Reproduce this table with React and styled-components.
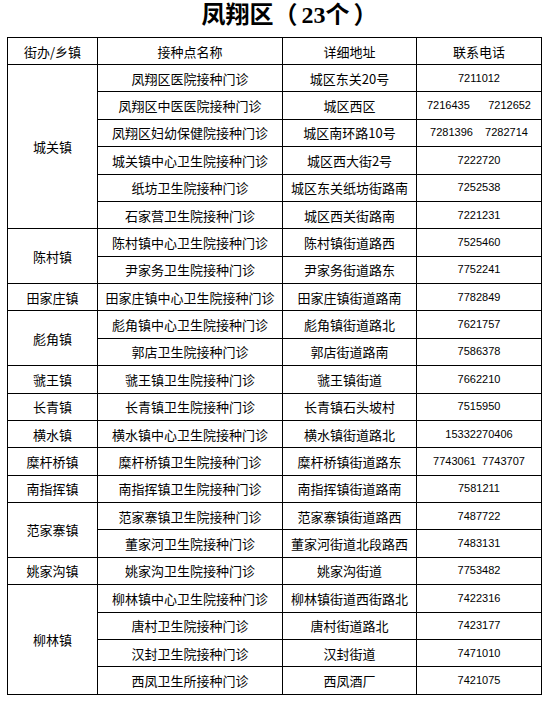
import React from "react";
import styled, { createGlobalStyle } from "styled-components";

const GlobalStyle = createGlobalStyle`
  html, body { margin: 0; padding: 0; background: #ffffff; }
  body { font-family: "Noto Sans CJK SC", "Liberation Sans", sans-serif; color: #000; }
`;

const Page = styled.div`
  width: 552px;
  padding: 0 0 0 7px;
  box-sizing: border-box;
`;

const Title = styled.h1`
  margin: 0;
  height: 37px;
  line-height: 30px;
  padding-left: 30px;
  width: 535px;
  box-sizing: border-box;
  text-align: center;
  font-family: "Liberation Serif", "Noto Sans CJK SC", serif;
  font-weight: 700;
  font-size: 24px;
  letter-spacing: 0;
`;

const TitleCount = styled.span`
  margin: 0 4px;
`;

const Table = styled.table`
  border-collapse: collapse;
  table-layout: fixed;
  width: 535px;
  border: 1px solid #000;
`;

const HeadRow = styled.tr`
  height: 27px;
`;

const Row = styled.tr`
  height: 27.39px;
`;

const Cell = styled.td`
  border: 1px solid #000;
  padding: 0;
  text-align: center;
  vertical-align: middle;
  font-family: ${(p) =>
    p.$num
      ? '"Liberation Sans", "Noto Sans CJK SC", sans-serif'
      : '"Noto Sans CJK SC", "Liberation Sans", sans-serif'};
  font-size: ${(p) => (p.$num ? "11px" : "13px")};
  line-height: 1;
  white-space: pre;
  color: #000;
  overflow: hidden;
`;

const HeadCell = styled(Cell).attrs({ as: "th" })`
  font-weight: 400;
`;

const widths = [90, 185, 134, 125];

const groups = [
  {
    town: "城关镇",
    rows: [
      ["凤翔区医院接种门诊", "城区东关20号", "7211012"],
      ["凤翔区中医医院接种门诊", "城区西区", "7216435      7212652"],
      ["凤翔区妇幼保健院接种门诊", "城区南环路10号", "7281396    7282714"],
      ["城关镇中心卫生院接种门诊", "城区西大街2号", "7222720"],
      ["纸坊卫生院接种门诊", "城区东关纸坊街路南", "7252538"],
      ["石家营卫生院接种门诊", "城区西关街路南", "7221231"],
    ],
  },
  {
    town: "陈村镇",
    rows: [
      ["陈村镇中心卫生院接种门诊", "陈村镇街道路西", "7525460"],
      ["尹家务卫生院接种门诊", "尹家务街道路东", "7752241"],
    ],
  },
  { town: "田家庄镇", rows: [["田家庄镇中心卫生院接种门诊", "田家庄镇街道路南", "7782849"]] },
  {
    town: "彪角镇",
    rows: [
      ["彪角镇中心卫生院接种门诊", "彪角镇街道路北", "7621757"],
      ["郭店卫生院接种门诊", "郭店街道路南", "7586378"],
    ],
  },
  { town: "虢王镇", rows: [["虢王镇卫生院接种门诊", "虢王镇街道", "7662210"]] },
  { town: "长青镇", rows: [["长青镇卫生院接种门诊", "长青镇石头坡村", "7515950"]] },
  { town: "横水镇", rows: [["横水镇中心卫生院接种门诊", "横水镇街道路北", "15332270406"]] },
  { town: "糜杆桥镇", rows: [["糜杆桥镇卫生院接种门诊", "糜杆桥镇街道路东", "7743061  7743707"]] },
  { town: "南指挥镇", rows: [["南指挥镇卫生院接种门诊", "南指挥镇街道路南", "7581211"]] },
  {
    town: "范家寨镇",
    rows: [
      ["范家寨镇卫生院接种门诊", "范家寨镇街道路西", "7487722"],
      ["董家河卫生院接种门诊", "董家河街道北段路西", "7483131"],
    ],
  },
  { town: "姚家沟镇", rows: [["姚家沟卫生院接种门诊", "姚家沟街道", "7753482"]] },
  {
    town: "柳林镇",
    rows: [
      ["柳林镇中心卫生院接种门诊", "柳林镇街道西街路北", "7422316"],
      ["唐村卫生院接种门诊", "唐村街道路北", "7423177"],
      ["汉封卫生院接种门诊", "汉封街道", "7471010"],
      ["西凤卫生所接种门诊", "西凤酒厂", "7421075"],
    ],
  },
];

export default function App() {
  return (
    <>
      <GlobalStyle />
      <Page>
        <Title>
          凤翔区（<TitleCount>23个</TitleCount>）
        </Title>
        <Table>
          <colgroup>
            {widths.map((w, i) => (
              <col key={i} style={{ width: w }} />
            ))}
          </colgroup>
          <thead>
            <HeadRow>
              <HeadCell>街办/乡镇</HeadCell>
              <HeadCell>接种点名称</HeadCell>
              <HeadCell>详细地址</HeadCell>
              <HeadCell>联系电话</HeadCell>
            </HeadRow>
          </thead>
          <tbody>
            {groups.map((g) =>
              g.rows.map((r, i) => (
                <Row key={g.town + i}>
                  {i === 0 && <Cell rowSpan={g.rows.length}>{g.town}</Cell>}
                  <Cell>{r[0]}</Cell>
                  <Cell>{r[1]}</Cell>
                  <Cell $num>{r[2]}</Cell>
                </Row>
              ))
            )}
          </tbody>
        </Table>
      </Page>
    </>
  );
}
